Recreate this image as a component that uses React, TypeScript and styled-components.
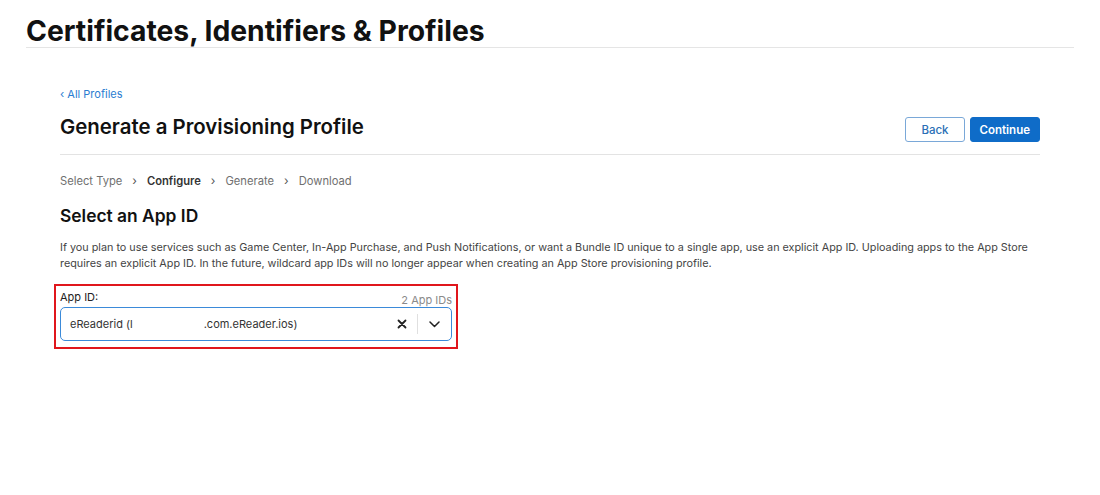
import React from 'react';
import styled, { createGlobalStyle } from 'styled-components';

const GlobalStyle = createGlobalStyle`
  body {
    margin: 0;
    background: #fff;
    font-family: Inter, "Noto Sans", "Liberation Sans", sans-serif;
    color: #1d1d1f;
  }
`;

const PageHeader = styled.header`
  margin: 0 26px;
  height: 47px;
  border-bottom: 1px solid #e5e5e5;
  display: flex;
  align-items: flex-end;
`;

const PageTitle = styled.h1`
  margin: 0 0 -1px;
  font-size: 28.3px;
  font-weight: 700;
  line-height: 34px;
  color: #111;
`;

const Main = styled.main`
  width: 980px;
  margin: 0 0 0 60px;
  padding-top: 38px;
`;

const BackLink = styled.a`
  display: block;
  font-size: 11px;
  line-height: 16px;
  color: #2a7dd1;
  text-decoration: none;
`;

const TitleRow = styled.div`
  display: flex;
  align-items: flex-end;
  justify-content: space-between;
  padding: 11px 0 11px;
  border-bottom: 1px solid #e3e3e3;
`;

const SectionTitle = styled.h2`
  margin: 0 0 2px;
  font-size: 20.4px;
  font-weight: 600;
  line-height: 28px;
  color: #111;
`;

const Buttons = styled.div`
  display: flex;
  gap: 5px;
  margin-bottom: 1px;
`;

const Button = styled.button<{ $primary?: boolean }>`
  height: 25px;
  padding: 0 ${({ $primary }) => ($primary ? '9px' : '15px')};
  border-radius: 3px;
  font-family: inherit;
  font-size: 11.5px;
  font-weight: ${({ $primary }) => ($primary ? 600 : 500)};
  border: 1px solid ${({ $primary }) => ($primary ? '#0f6cc8' : '#7aa8d8')};
  background: ${({ $primary }) => ($primary ? '#0f6cc8' : '#fff')};
  color: ${({ $primary }) => ($primary ? '#fff' : '#2a6fb6')};
`;

const Steps = styled.nav`
  display: flex;
  align-items: center;
  gap: 10px;
  padding-top: 18px;
  font-size: 11.2px;
  line-height: 16px;
  color: #707070;
`;

const Step = styled.span<{ $active?: boolean }>`
  color: ${({ $active }) => ($active ? '#333' : '#707070')};
  font-weight: ${({ $active }) => ($active ? 600 : 400)};
`;

const Sep = styled.span`
  font-size: 12px;
  color: #555;
`;

const H3 = styled.h3`
  margin: 15px 0 0;
  font-size: 17.4px;
  font-weight: 600;
  line-height: 24px;
  color: #111;
`;

const Para = styled.p`
  margin: 12px 0 0;
  font-size: 10.8px;
  line-height: 16px;
  color: #444;
`;

const Highlight = styled.div`
  width: 392px;
  margin: 12px 0 0 -6px;
  padding: 4px 4px 6px 4px;
  border: 2px solid #e0161c;
`;

const LabelRow = styled.div`
  display: flex;
  justify-content: space-between;
  align-items: flex-end;
  font-size: 11px;
  line-height: 14px;
`;

const Label = styled.span`
  color: #222;
`;

const Count = styled.span`
  color: #8a8a8a;
  margin-bottom: -3px;
`;

const Select = styled.div`
  margin-top: 3px;
  height: 32px;
  border: 1px solid #3b8ad9;
  border-radius: 5px;
  display: flex;
  align-items: center;
  padding: 0 4px 0 9px;
`;

const Value = styled.span`
  flex: 1;
  font-size: 11px;
  color: #333;
  display: flex;
`;

const Masked = styled.span`
  display: inline-block;
  width: 71px;
`;

const IconBtn = styled.span`
  width: 26px;
  display: flex;
  justify-content: center;
  align-items: center;
`;

const VDivider = styled.span`
  width: 1px;
  height: 20px;
  background: #e0e0e0;
  margin: 0 3px 0 2px;
`;

export default function App() {
  return (
    <>
      <GlobalStyle />
      <PageHeader>
        <PageTitle>Certificates, Identifiers &amp; Profiles</PageTitle>
      </PageHeader>
      <Main>
        <BackLink href="#">‹ All Profiles</BackLink>
        <TitleRow>
          <SectionTitle>Generate a Provisioning Profile</SectionTitle>
          <Buttons>
            <Button>Back</Button>
            <Button $primary>Continue</Button>
          </Buttons>
        </TitleRow>
        <Steps>
          <Step>Select Type</Step>
          <Sep>›</Sep>
          <Step $active>Configure</Step>
          <Sep>›</Sep>
          <Step>Generate</Step>
          <Sep>›</Sep>
          <Step>Download</Step>
        </Steps>
        <H3>Select an App ID</H3>
        <Para>
          If you plan to use services such as Game Center, In-App Purchase, and Push Notifications, or want a Bundle ID unique to a single app, use an explicit App ID. Uploading apps to the App Store requires an explicit App ID. In the future, wildcard app IDs will no longer appear when creating an App Store provisioning profile.
        </Para>
        <Highlight>
          <LabelRow>
            <Label>App ID:</Label>
            <Count>2 App IDs</Count>
          </LabelRow>
          <Select>
            <Value>
              eReaderid (l<Masked />.com.eReader.ios)
            </Value>
            <IconBtn>
              <svg width="10" height="10" viewBox="0 0 10 10">
                <path d="M1.5 1.5l7 7M8.5 1.5l-7 7" stroke="#222" strokeWidth="1.8" strokeLinecap="round" />
              </svg>
            </IconBtn>
            <VDivider />
            <IconBtn>
              <svg width="11" height="7" viewBox="0 0 11 7">
                <path d="M1 1l4.5 4.5L10 1" stroke="#222" strokeWidth="1.5" fill="none" strokeLinecap="round" strokeLinejoin="round" />
              </svg>
            </IconBtn>
          </Select>
        </Highlight>
      </Main>
    </>
  );
}
